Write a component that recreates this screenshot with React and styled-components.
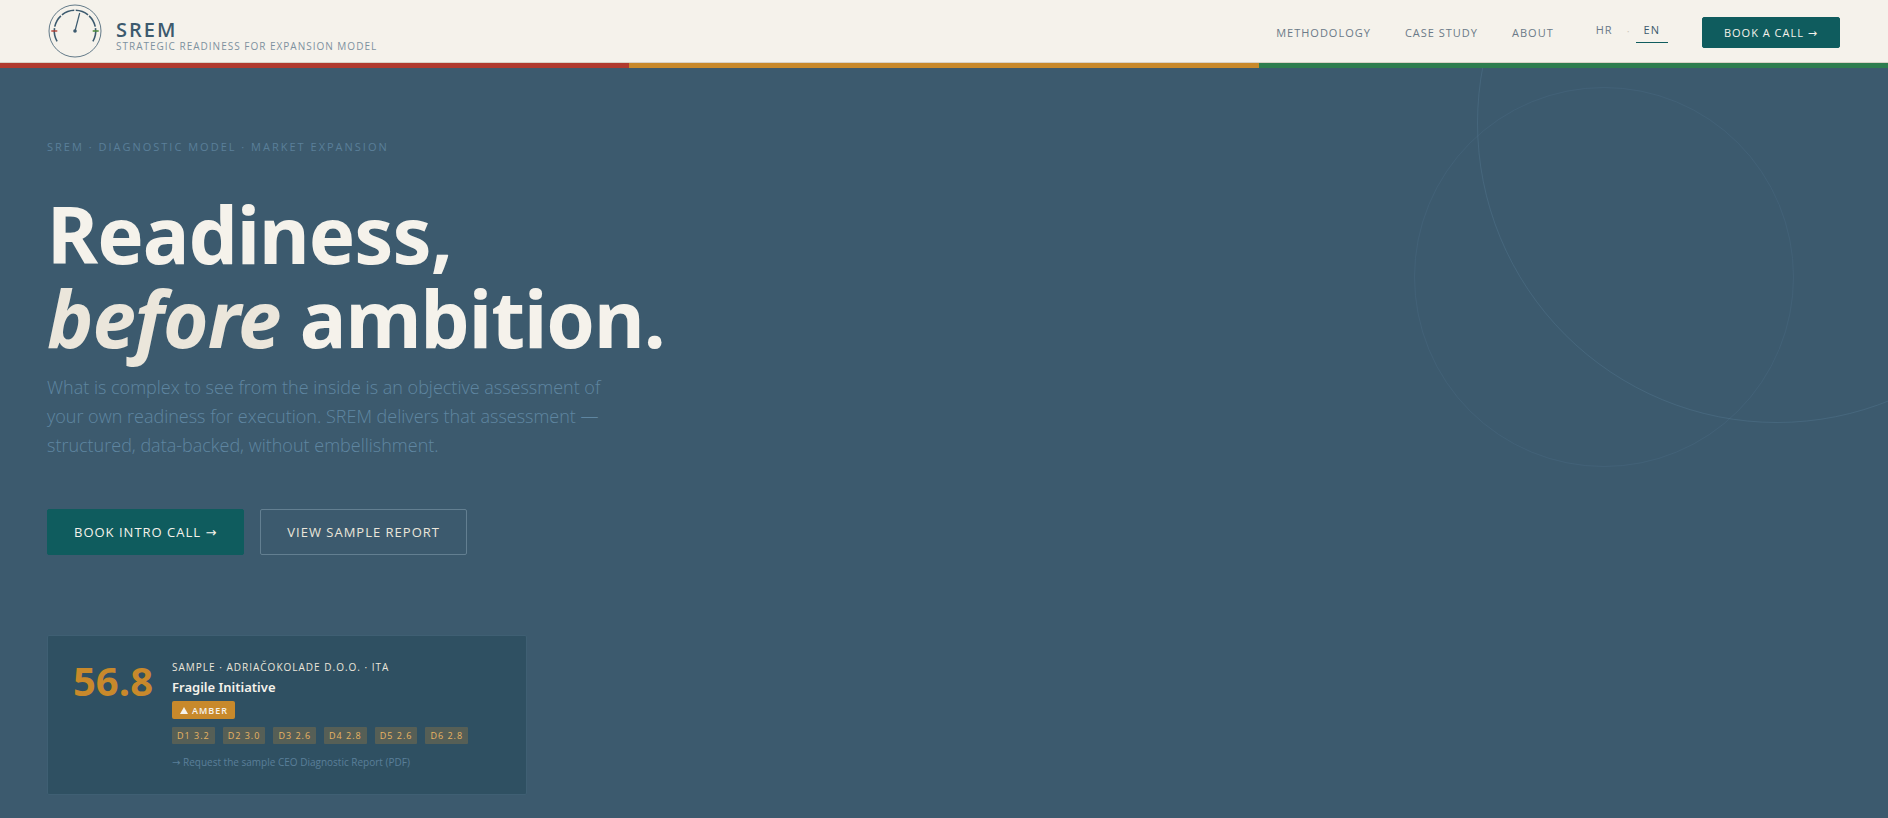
import React from "react";
import styled, { createGlobalStyle } from "styled-components";

const color = {
  paper: "#f5f2eb",
  sand: "#ebe6db",
  slate: "#3c5a6e",
  deep: "#2f5062",
  steel: "#5a7f99",
  grey: "#6b7a88",
  teal: "#0f5c5e",
  red: "#b03a2e",
  amber: "#c8892b",
  green: "#2e7d4f",
};

const GlobalStyle = createGlobalStyle`
  *, *::before, *::after { box-sizing: border-box; }
  html, body, #root { min-height: 100vh; }
  body {
    margin: 0;
    background: ${color.slate};
    font-family: "Open Sans", "Noto Sans", sans-serif;
    color: ${color.paper};
  }
  #root { display: flex; flex-direction: column; }
  h1, p { margin: 0; }
  a { text-decoration: none; }
`;

const Header = styled.header`
  display: flex;
  align-items: center;
  justify-content: space-between;
  height: 63px;
  padding: 0 48px 0 47px;
  background: ${color.paper};
  border-bottom: 1px solid #d8d2c6;
`;

const Brand = styled.a`
  display: flex;
  align-items: center;
  gap: 13px;
  color: ${color.slate};
`;

const Gauge = styled.svg`
  width: 56px;
  height: 56px;
`;

const BrandText = styled.span`
  display: flex;
  flex-direction: column;
  padding-top: 10px;
`;

const BrandName = styled.span`
  font-size: 20px;
  font-weight: 600;
  line-height: 20px;
  letter-spacing: 2px;
`;

const BrandTagline = styled.span`
  font-size: 10px;
  line-height: 12px;
  letter-spacing: 1px;
  color: #7d919f;
`;

const Nav = styled.nav`
  display: flex;
  align-items: center;
  gap: 34px;
  padding-top: 2px;
`;

const NavLink = styled.a`
  padding-top: 1px;
  font-size: 11px;
  line-height: 16px;
  letter-spacing: 1px;
  color: ${color.grey};
`;

const Languages = styled.div`
  display: flex;
  align-items: center;
  gap: 6px;
  margin-bottom: 4px;
  color: #d0cbc0;
  font-size: 11px;
`;

const Language = styled.a`
  padding: 4px 8px;
  border-bottom: 1px solid ${(p) => (p.$active ? color.teal : "transparent")};
  font-size: 11px;
  line-height: 16px;
  letter-spacing: 1px;
  color: ${(p) => (p.$active ? color.slate : color.grey)};
`;

const Button = styled.button`
  height: ${(p) => (p.$small ? 31 : 46)}px;
  padding: 0 ${(p) => (p.$small ? 21 : 26)}px;
  border: 1px solid ${(p) => (p.$outline ? "#637f91" : color.teal)};
  border-radius: 2px;
  background: ${(p) => (p.$outline ? "transparent" : color.teal)};
  color: ${(p) => (p.$outline ? color.sand : color.paper)};
  font-family: inherit;
  font-size: ${(p) => (p.$small ? 11 : 13)}px;
  font-weight: 500;
  letter-spacing: 1px;
  white-space: nowrap;
`;

const Arrow = styled.span`
  font-family: "DejaVu Sans", sans-serif;
`;

const Stripe = styled.div`
  display: grid;
  grid-template-columns: repeat(3, 1fr);
  height: 5px;
`;

const Band = styled.span`
  background: ${(p) => color[p.$tone]};
`;

const Hero = styled.main`
  position: relative;
  flex: 1;
  overflow: hidden;
  padding: 70px 47px 24px;
`;

const Ring = styled.span`
  position: absolute;
  top: ${(p) => p.$top}px;
  right: ${(p) => p.$right}%;
  width: ${(p) => p.$size}px;
  height: ${(p) => p.$size}px;
  border: 1px solid rgba(90, 127, 153, ${(p) => p.$alpha});
  border-radius: 50%;
  pointer-events: none;
`;

const Eyebrow = styled.p`
  font-size: 11px;
  line-height: 18px;
  letter-spacing: 2px;
  color: ${color.steel};
`;

const Title = styled.h1`
  margin-top: 36px;
  font-family: "Noto Sans", sans-serif;
  font-size: 78px;
  font-weight: 700;
  line-height: 84px;
  letter-spacing: -1px;

  em { color: ${color.sand}; }
`;

const Lead = styled.p`
  max-width: 560px;
  margin-top: 13px;
  font-size: 18px;
  font-weight: 300;
  line-height: 29px;
  color: #5f86a1;
`;

const Actions = styled.div`
  display: flex;
  gap: 16px;
  margin-top: 49px;
`;

const Sample = styled.section`
  display: flex;
  gap: 19px;
  width: 480px;
  max-width: 100%;
  margin-top: 80px;
  padding: 24px 25px;
  border: 1px solid #3f5f73;
  border-radius: 2px;
  background: ${color.deep};
`;

const Score = styled.strong`
  font-size: 40px;
  font-weight: 700;
  line-height: 42px;
  color: ${color.amber};
`;

const Details = styled.div`
  display: flex;
  flex-direction: column;
  align-items: flex-start;
`;

const Client = styled.p`
  font-size: 10px;
  line-height: 14px;
  letter-spacing: 1px;
  color: ${color.sand};
`;

const Verdict = styled.p`
  margin-top: 3px;
  font-family: "Noto Sans", sans-serif;
  font-size: 13px;
  font-weight: 600;
  line-height: 20px;
`;

const Badge = styled.span`
  display: flex;
  align-items: center;
  gap: 4px;
  height: 18px;
  margin-top: 4px;
  padding: 0 7px 0 8px;
  border-radius: 2px;
  background: ${color.amber};
  font-size: 9px;
  font-weight: 600;
  letter-spacing: 1px;
`;

const Triangle = styled.svg`
  width: 8px;
  height: 7px;
  fill: currentColor;
`;

const Scores = styled.ul`
  display: flex;
  gap: 8px;
  margin: 8px 0 0;
  padding: 0;
  list-style: none;
`;

const Chip = styled.li`
  padding: 0 5px;
  border-radius: 1px;
  background: #565f56;
  color: #e8b463;
  font-size: 9px;
  font-weight: 500;
  line-height: 17px;
  letter-spacing: 1px;
  white-space: nowrap;
`;

const ReportLink = styled.a`
  margin-top: 11px;
  font-size: 10px;
  line-height: 14px;
  color: ${color.steel};
`;

const dimensions = ["D1 3.2", "D2 3.0", "D3 2.6", "D4 2.8", "D5 2.6", "D6 2.8"];

function arc(from, to, r = 20.7) {
  const at = (deg) => {
    const a = (deg * Math.PI) / 180;
    return `${28 + r * Math.sin(a)} ${28 - r * Math.cos(a)}`;
  };
  return `M${at(from)} A${r} ${r} 0 0 1 ${at(to)}`;
}

function Logo() {
  return (
    <Gauge viewBox="0 0 56 56" fill="none" aria-hidden="true">
      <circle cx="28" cy="28" r="26" stroke={color.slate} strokeWidth="0.8" />
      {[[-120, -82], [-78, -43], [-39, -2], [2, 39], [43, 78], [82, 120]].map(([a, b]) => (
        <path key={a} d={arc(a, b)} stroke={color.slate} strokeWidth="1.6" />
      ))}
      <path d="M4.3 28h6" stroke={color.red} strokeWidth="1.8" opacity="0.75" />
      <path d="M45.7 28h6" stroke="#4c8a3c" strokeWidth="1.8" opacity="0.85" />
      <path d="M28 28L32.7 10" stroke={color.slate} strokeWidth="1.2" />
      <circle cx="28" cy="28" r="1.8" fill={color.slate} />
    </Gauge>
  );
}

export default function App() {
  return (
    <>
      <GlobalStyle />
      <Header>
        <Brand href="#">
          <Logo />
          <BrandText>
            <BrandName>SREM</BrandName>
            <BrandTagline>STRATEGIC READINESS FOR EXPANSION MODEL</BrandTagline>
          </BrandText>
        </Brand>
        <Nav>
          <NavLink href="#methodology">METHODOLOGY</NavLink>
          <NavLink href="#case-study">CASE STUDY</NavLink>
          <NavLink href="#about">ABOUT</NavLink>
          <Languages>
            <Language href="#hr">HR</Language>
            ·
            <Language href="#en" $active>EN</Language>
          </Languages>
          <Button type="button" $small>BOOK A CALL <Arrow>→</Arrow></Button>
        </Nav>
      </Header>
      <Stripe>
        <Band $tone="red" />
        <Band $tone="amber" />
        <Band $tone="green" />
      </Stripe>
      <Hero>
        <Ring $top={-245} $right={-10} $size={600} $alpha={0.35} />
        <Ring $top={19} $right={5} $size={380} $alpha={0.2} />
        <Eyebrow>SREM · DIAGNOSTIC MODEL · MARKET EXPANSION</Eyebrow>
        <Title>
          Readiness,
          <br />
          <em>before</em> ambition.
        </Title>
        <Lead>
          What is complex to see from the inside is an objective assessment of
          your own readiness for execution. SREM delivers that assessment —
          structured, data-backed, without embellishment.
        </Lead>
        <Actions>
          <Button type="button">BOOK INTRO CALL <Arrow>→</Arrow></Button>
          <Button type="button" $outline>VIEW SAMPLE REPORT</Button>
        </Actions>
        <Sample>
          <Score>56.8</Score>
          <Details>
            <Client>SAMPLE · ADRIAČOKOLADE D.O.O. · ITA</Client>
            <Verdict>Fragile Initiative</Verdict>
            <Badge>
              <Triangle viewBox="0 0 8 7"><path d="M4 0L8 7H0z" /></Triangle>
              AMBER
            </Badge>
            <Scores>
              {dimensions.map((d) => (
                <Chip key={d}>{d}</Chip>
              ))}
            </Scores>
            <ReportLink href="#report"><Arrow>→</Arrow> Request the sample CEO Diagnostic Report (PDF)</ReportLink>
          </Details>
        </Sample>
      </Hero>
    </>
  );
}
